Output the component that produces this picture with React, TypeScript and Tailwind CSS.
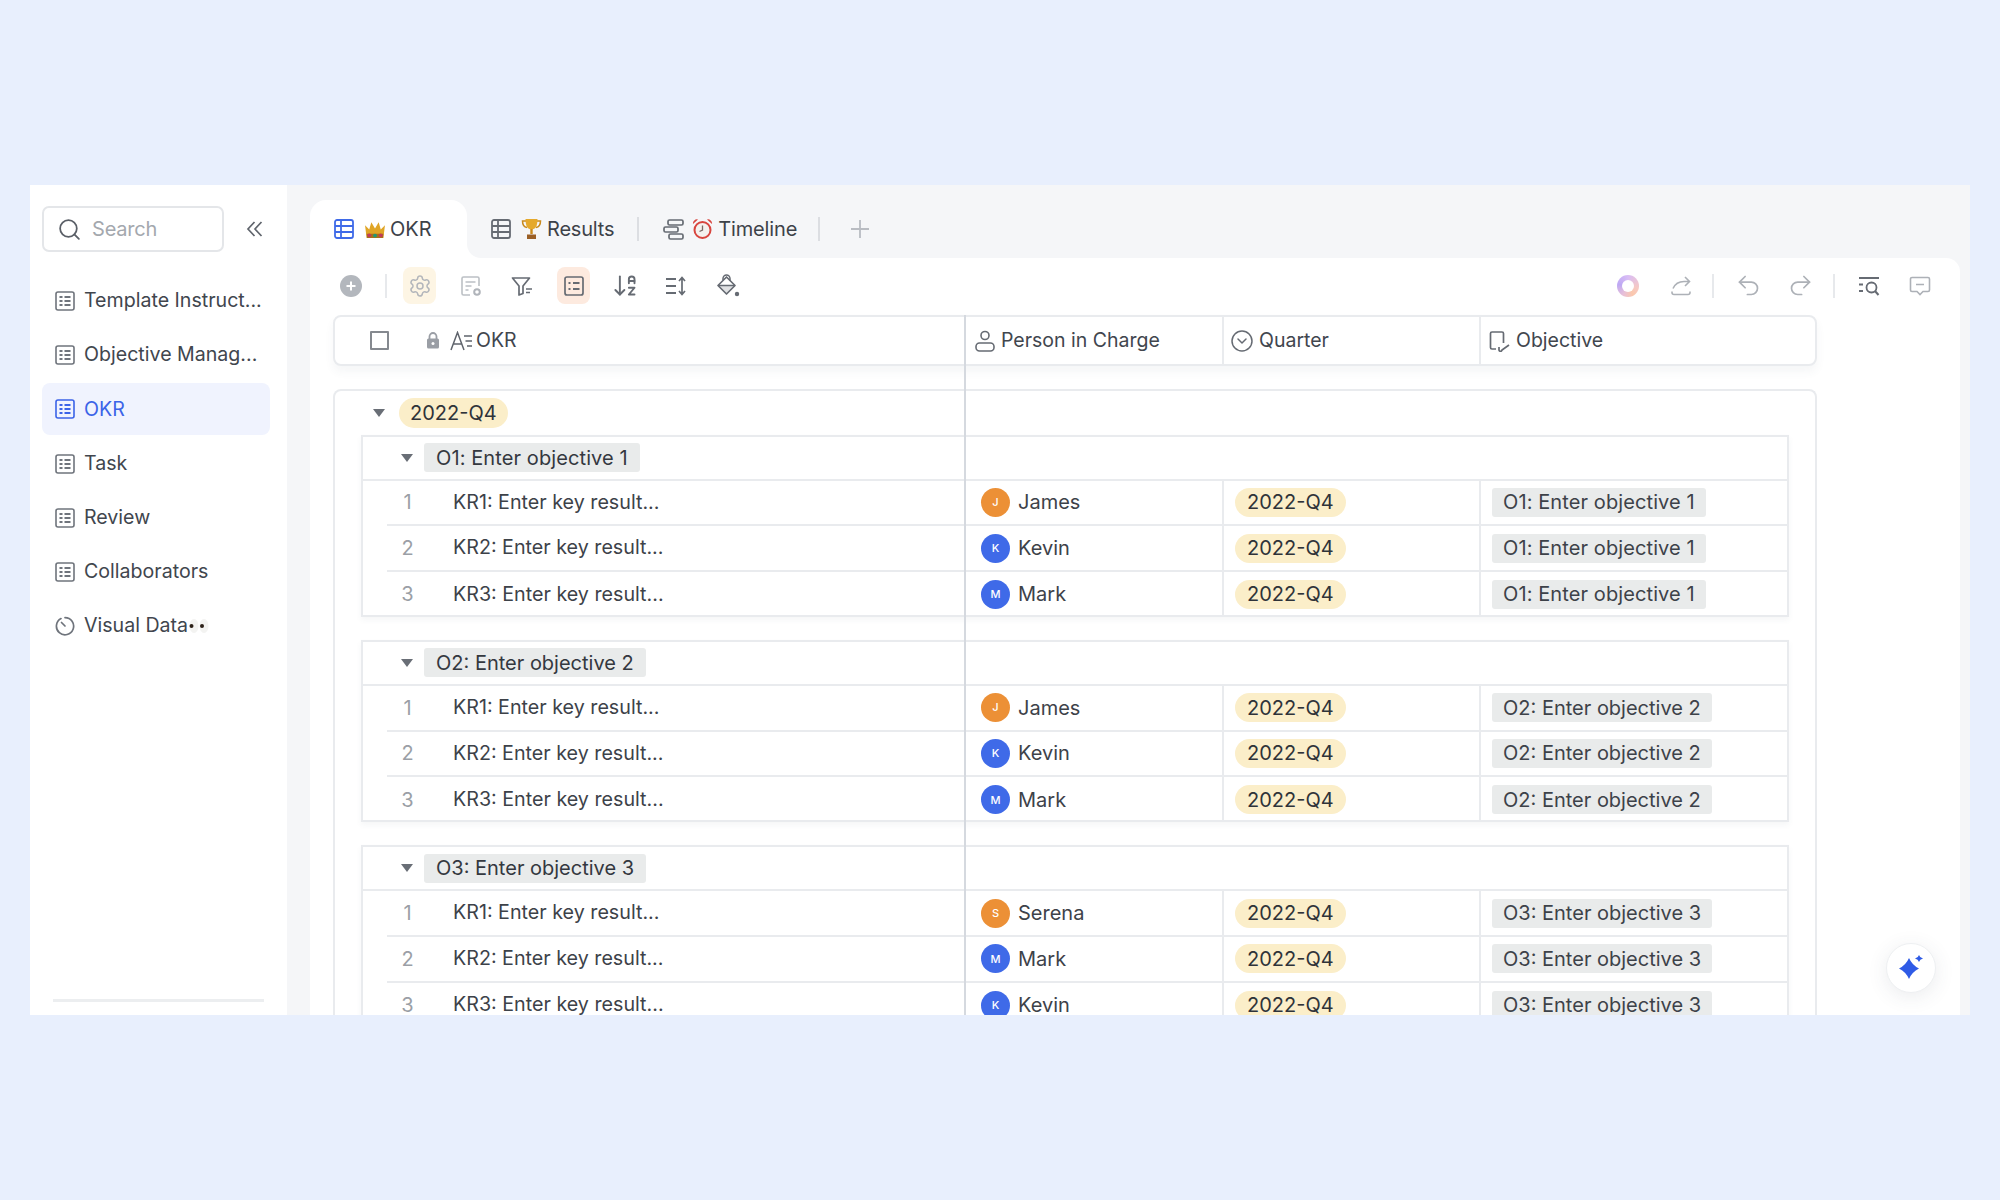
import React from "react";
import { ArrowDownAZ, CircleChevronDown, Redo2, Search, Settings, Undo2 } from "lucide-react";

const FONT = { fontFamily: "Inter, 'Noto Sans', sans-serif" };

function NavTable({ color = "#6f747c" }: { color?: string }) {
  return (
    <svg width="20" height="20" viewBox="0 0 20 20" fill="none" className="shrink-0">
      <rect x="1" y="1" width="18" height="18" rx="2" stroke={color} strokeWidth="1.6" />
      <path d="M4.5 6h3M4.5 10h3M4.5 14h3M9.5 6h6M9.5 10h6M9.5 14h6" stroke={color} strokeWidth="2" />
    </svg>
  );
}

function TabTable({ color }: { color: string }) {
  return (
    <svg width="20" height="20" viewBox="0 0 20 20" fill="none" className="shrink-0">
      <rect x="1" y="1" width="18" height="18" rx="2" stroke={color} strokeWidth="1.8" />
      <path d="M1 7h18M1 13h18M7 1v18" stroke={color} strokeWidth="1.8" />
    </svg>
  );
}

function VisualIcon() {
  return (
    <svg width="20" height="20" viewBox="0 0 20 20" fill="none" className="shrink-0">
      <path d="M6 2.6A8.6 8.6 0 1 0 10 1.6" stroke="#6f747c" strokeWidth="1.7" strokeLinecap="round" />
      <path d="M6.5 6.5 10 10" stroke="#6f747c" strokeWidth="1.7" strokeLinecap="round" />
    </svg>
  );
}

function Crown() {
  return (
    <svg width="22" height="19" viewBox="0 0 21 18" className="shrink-0">
      <path d="M1 5l4 4 2-7 3.500 6L14 2l2 7 4-4-1.500 12h-16z" fill="#e0a526" />
      <path d="M2.500 13h16l-.3 4h-15.400z" fill="#a8701a" />
      <circle cx="5" cy="14.600" r="1.800" fill="#c23a5a" />
      <circle cx="10.500" cy="14.800" r="1.800" fill="#1f9a78" />
      <circle cx="16" cy="14.600" r="1.800" fill="#c23a5a" />
    </svg>
  );
}

function Trophy() {
  return (
    <svg width="21" height="22" viewBox="0 0 21 22" fill="none" className="shrink-0">
      <path d="M5 3H1.500c0 4 1.500 6 4.500 6.500M16 3h3.500c0 4-1.500 6-4.500 6.500" stroke="#c98a1c" strokeWidth="1.500" />
      <path d="M4.500 1h12c0 7-2 10.500-6 10.500S4.500 8 4.500 1z" fill="#e5a92c" />
      <path d="M9.300 11h2.400v5h-2.400z" fill="#c98a1c" />
      <path d="M6 16.500h9V21H6z" fill="#9a5f26" />
    </svg>
  );
}

function AlarmClock() {
  return (
    <svg width="21" height="22" viewBox="0 0 21 22" fill="none" className="shrink-0">
      <path d="M1 6a4 4 0 0 1 5-4.500zM20 6a4 4 0 0 0-5-4.500z" fill="#d8453e" />
      <circle cx="10.500" cy="12" r="8" fill="#f4f1ee" stroke="#d8453e" strokeWidth="2" />
      <path d="M10.500 7.500V12l-3 1.500" stroke="#7a6a66" strokeWidth="1.300" />
    </svg>
  );
}

function Eyes() {
  return (
    <svg width="22" height="16" viewBox="0 0 22 16" className="shrink-0">
      <ellipse cx="6" cy="8" rx="4.500" ry="7" fill="#f3f3f1" />
      <ellipse cx="16" cy="8" rx="4.500" ry="7" fill="#f3f3f1" />
      <circle cx="3.500" cy="8" r="2" fill="#2c2118" />
      <circle cx="14" cy="8" r="2" fill="#2c2118" />
    </svg>
  );
}

const stroke = "#adb1b7";
const dark = "#666b73";

function PlusCircle() {
  return (
    <svg width="22" height="22" viewBox="0 0 22 22" className="shrink-0">
      <circle cx="11" cy="11" r="11" fill="#b3b7bd" />
      <path d="M11 6.500v9M6.500 11h9" stroke="#fff" strokeWidth="2" />
    </svg>
  );
}

function DocGear() {
  return (
    <svg width="22" height="22" viewBox="0 0 22 22" fill="none">
      <path d="M10 20H3.500A1.500 1.500 0 0 1 2 18.500v-15A1.500 1.500 0 0 1 3.500 2h14A1.500 1.500 0 0 1 19 3.500V11" stroke="#bcc0c5" strokeWidth="1.600" />
      <path d="M5.500 7h10M5.500 11h6M5.500 15h3" stroke="#bcc0c5" strokeWidth="1.600" />
      <circle cx="17" cy="17" r="2.800" stroke="#b0b4ba" strokeWidth="2" />
    </svg>
  );
}

function FilterIcon() {
  return (
    <svg width="22" height="22" viewBox="0 0 22 22" fill="none">
      <path d="M1.500 3h17l-6.500 8v7.500L8 20v-9z" stroke={dark} strokeWidth="1.700" strokeLinejoin="round" />
      <path d="M15 14h6M15 17.500h4" stroke={dark} strokeWidth="1.600" />
    </svg>
  );
}

function CardIcon() {
  return (
    <svg width="22" height="22" viewBox="0 0 22 22" fill="none">
      <rect x="2" y="2" width="18" height="18" rx="2" stroke={dark} strokeWidth="1.700" />
      <path d="M5.500 8h2M5.500 14h2M10 8h6.500M10 14h6.500" stroke={dark} strokeWidth="1.900" />
    </svg>
  );
}

function RowHeight() {
  return (
    <svg width="22" height="22" viewBox="0 0 22 22" fill="none">
      <path d="M1 4h10M1 11h10M1 18h10" stroke={dark} strokeWidth="1.800" />
      <path d="M17 3v16M14 6l3-3.500L20 6M14 16l3 3.500 3-3.500" stroke={dark} strokeWidth="1.700" />
    </svg>
  );
}

function Bucket() {
  return (
    <svg width="24" height="24" viewBox="0 0 24 24" fill="none">
      <path d="M7 6V4.500a3.500 3.500 0 0 1 7 0V7" stroke={dark} strokeWidth="1.500" />
      <path d="M10.500 3 2 11.500 10.500 20 19 11.500z" stroke={dark} strokeWidth="1.700" strokeLinejoin="round" />
      <path d="M2.500 11.500H18.500" stroke={dark} strokeWidth="1.500" />
      <path d="M3.500 12h14l-7 7z" fill={dark} opacity=".2" />
      <circle cx="21" cy="20" r="2.200" fill={dark} />
    </svg>
  );
}

function Ring() {
  return (
    <div className="w-[22px] h-[22px] rounded-full bg-[conic-gradient(#d9bdf5,#f6c9c4_100deg,#fbc8ad_150deg,#e8c0d8_210deg,#bda8f4_280deg,#d9bdf5)] flex items-center justify-center shrink-0">
      <div className="w-[12px] h-[12px] rounded-full bg-white" />
    </div>
  );
}

function ShareIcon() {
  return (
    <svg width="22" height="22" viewBox="0 0 22 22" fill="none">
      <path d="M3 13.500C5 9 8.500 6.500 14 6.500h5M15 2l4.500 4.500L15 11" stroke={stroke} strokeWidth="1.600" />
      <path d="M2 16.500v1a2 2 0 0 0 2 2h14a2 2 0 0 0 2-2v-1" stroke={stroke} strokeWidth="1.600" />
    </svg>
  );
}

function ListSearch() {
  return (
    <svg width="22" height="22" viewBox="0 0 22 22" fill="none">
      <path d="M1 3h20M1 9.500h4M1 16h4" stroke={dark} strokeWidth="2" />
      <circle cx="13.500" cy="12.500" r="5" stroke={dark} strokeWidth="1.800" />
      <path d="m17 16 3.500 4" stroke={dark} strokeWidth="2" />
    </svg>
  );
}

function Comment() {
  return (
    <svg width="22" height="22" viewBox="0 0 22 22" fill="none">
      <path d="M3 2.500h16A1.500 1.500 0 0 1 20.500 4v11a1.500 1.500 0 0 1-1.500 1.500h-5L11 19.500 8 16.500H3A1.500 1.500 0 0 1 1.500 15V4A1.500 1.500 0 0 1 3 2.500z" stroke={stroke} strokeWidth="1.600" />
      <path d="M7 9.500h8" stroke={stroke} strokeWidth="1.600" />
    </svg>
  );
}

function Lock() {
  return (
    <svg width="14" height="17" viewBox="0 0 14 17" className="shrink-0">
      <path d="M3.500 7V4.500a3.500 3.500 0 0 1 7 0V7" fill="none" stroke="#9a9ea5" strokeWidth="1.800" />
      <rect x="1" y="6.500" width="12" height="10" rx="1.500" fill="#9a9ea5" />
      <circle cx="7" cy="11.500" r="1.500" fill="#fff" />
    </svg>
  );
}

function TextField() {
  return (
    <svg width="23" height="20" viewBox="0 0 23 20" fill="none" className="shrink-0">
      <path d="M1 19 7.500 1.500 14 19M3.500 13h8" stroke="#5f646c" strokeWidth="1.500" />
      <path d="M14 5h8M15.500 10h6.500M17 15h5" stroke="#5f646c" strokeWidth="1.500" />
    </svg>
  );
}

function Person() {
  return (
    <svg width="20" height="22" viewBox="0 0 20 22" fill="none" className="shrink-0">
      <circle cx="10" cy="5.500" r="4" stroke="#666b73" strokeWidth="1.600" />
      <rect x="1" y="13" width="18" height="8" rx="3.500" stroke="#666b73" strokeWidth="1.600" />
    </svg>
  );
}

function LinkIcon() {
  return (
    <svg width="22" height="22" viewBox="0 0 22 22" fill="none" className="shrink-0">
      <path d="M7 19H3a1.500 1.500 0 0 1-1.500-1.500v-14A1.500 1.500 0 0 1 3 2h10a1.500 1.500 0 0 1 1.500 1.500V13" stroke="#666b73" strokeWidth="1.700" />
      <path d="M10 17v2.500a1.500 1.500 0 0 0 3 .5l7-5" stroke="#666b73" strokeWidth="1.700" />
    </svg>
  );
}

function Collapse() {
  return (
    <svg width="18" height="18" viewBox="0 0 18 18" fill="none" className="shrink-0 ml-[22px]">
      <path d="M8.500 2 2 9l6.500 7M15.500 2 9 9l6.500 7" stroke="#5f646c" strokeWidth="1.700" />
    </svg>
  );
}

function Caret() {
  return <div className="w-0 h-0 border-l-[6px] border-r-[6px] border-t-[8px] border-l-transparent border-r-transparent border-t-[#696e76]" />;
}

const COLS = "grid grid-cols-[604px_257px_257px_1fr]";

const NAV = ["Template Instruct...", "Objective Manag...", "OKR", "Task", "Review", "Collaborators"];

function Sidebar() {
  return (
    <aside className="w-[257px] shrink-0 bg-white flex flex-col px-[12px] pt-[21px] pb-[13px]">
      <div className="flex items-center">
        <div className="w-[182px] h-[46px] rounded-[7px] border-2 border-[#e4e6e9] flex items-center pl-[13px] gap-[10px] text-[20px] text-[#a4a8ae]">
          <Search size={25} color="#5a5f67" strokeWidth={1.7} />
          <span className="tracking-[-0.2px]">Search</span>
        </div>
        <Collapse />
      </div>
      <nav className="mt-[23px] flex flex-col gap-[2.200px] w-[228px]">
        {NAV.map((n) => {
          const active = n === "OKR";
          return (
            <div key={n} className={`h-[52px] rounded-[8px] flex items-center pl-[13px] gap-[9px] text-[19.600px] ${active ? "bg-[#f0f3fe] text-[#3b63e8]" : "text-[#41464e]"}`}>
              <NavTable color={active ? "#3b63e8" : "#6f747c"} />
              <span className="whitespace-nowrap">{n}</span>
            </div>
          );
        })}
        <div className="h-[52px] flex items-center pl-[13px] gap-[9px] text-[19.600px] text-[#41464e]">
          <VisualIcon />
          <span>Visual Data</span>
          <span className="-ml-[9px]"><Eyes /></span>
        </div>
      </nav>
      <div className="mt-auto mx-[11px] h-[3px] bg-[#eceef0]" />
    </aside>
  );
}

function TimelineIcon() {
  return (
    <svg width="21" height="21" viewBox="0 0 21 21" fill="none">
      <rect x="5" y="1" width="15" height="5" rx="1.500" stroke="#666b73" strokeWidth="1.700" />
      <rect x="1" y="8" width="14" height="5" rx="1.500" stroke="#666b73" strokeWidth="1.700" />
      <rect x="6" y="15" width="14" height="5" rx="1.500" stroke="#666b73" strokeWidth="1.700" />
    </svg>
  );
}

function Tabs() {
  return (
    <div className="flex h-[73px] pt-[15px] shrink-0 text-[20px] text-[#3d4249] pl-[23px]">
      <div className="w-[157px] bg-white rounded-t-[16px] flex items-center pl-[24px]">
        <TabTable color="#3f6ae8" />
        <span className="ml-[10px]"><Crown /></span>
        <span className="ml-[4px]">OKR</span>
      </div>
      <div className="flex-1 bg-white">
        <div className="h-full bg-[#f5f6f8] rounded-bl-[14px] flex items-center pl-[24px]">
          <TabTable color="#666b73" />
          <span className="ml-[10px]"><Trophy /></span>
          <span className="ml-[5px] tracking-[-0.2px]">Results</span>
          <div className="w-[2px] h-[24px] bg-[#dcdee2] ml-[23px]" />
          <span className="ml-[24px]"><TimelineIcon /></span>
          <span className="ml-[8px]"><AlarmClock /></span>
          <span className="ml-[5px] tracking-[-0.15px]">Timeline</span>
          <div className="w-[2px] h-[24px] bg-[#dcdee2] ml-[21px]" />
          <svg width="20" height="20" viewBox="0 0 20 20" className="ml-[30px]"><path d="M10 1v18M1 10h18" stroke="#b9bcc2" strokeWidth="1.800" /></svg>
        </div>
      </div>
    </div>
  );
}

function Sep() {
  return <div className="w-[2px] h-[24px] bg-[#e7e9ec]" />;
}

function Toolbar() {
  return (
    <div className="h-[57px] shrink-0 flex items-center pl-[30px] pr-[29px] pb-[2px]">
      <PlusCircle />
      <div className="ml-[23px]"><Sep /></div>
      <div className="ml-[16px] flex items-center gap-[19.100px]">
        <div className="w-[33px] h-[37px] rounded-[8px] bg-[#fdf5e4] flex items-center justify-center">
          <Settings size={24} color="#b3b6bb" strokeWidth={1.500} />
        </div>
        <div className="w-[32px] flex justify-center"><DocGear /></div>
        <div className="w-[32px] flex justify-center"><FilterIcon /></div>
        <div className="w-[33px] h-[37px] rounded-[8px] bg-[#fdeadf] flex items-center justify-center"><CardIcon /></div>
        <div className="w-[32px] flex justify-center"><ArrowDownAZ size={27} color={dark} strokeWidth={1.700} /></div>
        <div className="w-[32px] flex justify-center"><RowHeight /></div>
        <div className="w-[32px] flex justify-center"><Bucket /></div>
      </div>
      <div className="ml-auto flex items-center">
        <Ring />
        <div className="ml-[31px]"><ShareIcon /></div>
        <div className="ml-[20px]"><Sep /></div>
        <Undo2 size={27} color={stroke} strokeWidth={1.500} className="ml-[21px]" />
        <Redo2 size={27} color={stroke} strokeWidth={1.500} className="ml-[25px]" />
        <div className="ml-[19px]"><Sep /></div>
        <div className="ml-[23px]"><ListSearch /></div>
        <div className="ml-[29px]"><Comment /></div>
      </div>
    </div>
  );
}

function HeaderRow() {
  return (
    <div className="grid grid-cols-[632px_257px_257px_1fr] h-[51px] rounded-[8px] border-2 border-[#e9ebee] bg-white shadow-[0_6px_10px_rgba(60,70,90,0.05)] text-[19.500px] text-[#41464e]">
      <div className="flex items-center pl-[35px]">
        <div className="w-[19px] h-[19px] border-2 border-[#85898f] rounded-[1px]" />
        <span className="ml-[37px]"><Lock /></span>
        <span className="ml-[10px]"><TextField /></span>
        <span className="ml-[3px]">OKR</span>
      </div>
      <div className="flex items-center pl-[8px] gap-[6px] border-r-2 border-[#e9ebee]"><Person /><span>Person in Charge</span></div>
      <div className="flex items-center pl-[6px] gap-[5px] border-r-2 border-[#e9ebee]"><CircleChevronDown size={24} color="#666b73" strokeWidth={1.500} /><span>Quarter</span></div>
      <div className="flex items-center pl-[8px] gap-[5px]"><LinkIcon /><span>Objective</span></div>
    </div>
  );
}

type Row = { kr: string; person: string; color: string };

function Avatar({ name, color }: { name: string; color: string }) {
  return (
    <div className={`w-[29px] h-[29px] rounded-full flex items-center justify-center text-white text-[11px] font-medium ${color}`}>
      {name[0]}
    </div>
  );
}

function ObjectiveBox({ title, rows, tagClass }: { title: string; rows: Row[]; tagClass: string }) {
  return (
    <section className="border-2 border-[#e9ebee] bg-white shadow-[0_3px_6px_rgba(60,70,90,0.05)]">
      <div className="h-[44px] border-b-2 border-[#e9ebee] flex items-center pl-[38px]">
        <Caret />
        <div className={`ml-[11px] h-[29px] px-[12px] flex items-center rounded-[3px] bg-[#e9ebeb] text-[#34383f] whitespace-nowrap ${tagClass}`}>{title}</div>
      </div>
      {rows.map((r, i) => {
        const last = i === 2;
        const rowCls = last ? "h-[43px]" : "h-[45.700px]";
        const line = last ? "pt-[2px]" : "border-b-2";
        return (
          <div key={i} className={`${COLS} ${rowCls}`}>
            <div className={`ml-[24px] flex items-center border-[#e9ebee] ${line}`}>
              <span className="w-[41px] text-center text-[#9b9fa6]">{i + 1}</span>
              <span className="ml-[25px] text-[19.700px] text-[#3d4249] whitespace-nowrap">{r.kr}</span>
            </div>
            <div className={`flex items-center pl-[14px] gap-[8px] border-r-2 border-[#e9ebee] text-[#3d4249] ${line}`}>
              <Avatar name={r.person} color={r.color} />
              <span>{r.person}</span>
            </div>
            <div className={`flex items-center pl-[11px] border-r-2 border-[#e9ebee] ${line}`}>
              <span className="h-[29px] px-[12px] flex items-center rounded-full bg-[#fbeec9] text-[#2f3339]">2022-Q4</span>
            </div>
            <div className={`flex items-center pl-[11px] border-[#e9ebee] ${line}`}>
              <span className={`h-[29px] px-[11px] flex items-center rounded-[3px] bg-[#e9ebeb] text-[#3d4249] whitespace-nowrap ${tagClass}`}>{title}</span>
            </div>
          </div>
        );
      })}
    </section>
  );
}

const ORANGE = "bg-[#ec9036]";
const BLUE = "bg-[#3f6ae8]";

const GROUPS: { title: string; tagClass: string; rows: Row[] }[] = [
  {
    title: "O1: Enter objective 1",
    tagClass: "tracking-[0.1px]",
    rows: [
      { kr: "KR1: Enter key result...", person: "James", color: ORANGE },
      { kr: "KR2: Enter key result...", person: "Kevin", color: BLUE },
      { kr: "KR3: Enter key result...", person: "Mark", color: BLUE },
    ],
  },
  {
    title: "O2: Enter objective 2",
    tagClass: "tracking-normal",
    rows: [
      { kr: "KR1: Enter key result...", person: "James", color: ORANGE },
      { kr: "KR2: Enter key result...", person: "Kevin", color: BLUE },
      { kr: "KR3: Enter key result...", person: "Mark", color: BLUE },
    ],
  },
  {
    title: "O3: Enter objective 3",
    tagClass: "tracking-normal",
    rows: [
      { kr: "KR1: Enter key result...", person: "Serena", color: ORANGE },
      { kr: "KR2: Enter key result...", person: "Mark", color: BLUE },
      { kr: "KR3: Enter key result...", person: "Kevin", color: BLUE },
    ],
  },
];

function Table() {
  return (
    <div className="relative ml-[23px] w-[1484px] flex flex-col">
      <HeaderRow />
      <div className="mt-[23px] rounded-t-[8px] border-2 border-b-0 border-[#e9ebee] bg-white text-[20px] pb-[24px]">
        <div className="h-[43.500px] flex items-center pl-[38px]">
          <Caret />
          <span className="ml-[14px] h-[30px] px-[11px] flex items-center rounded-full bg-[#fbeec9] text-[#2f3339]">2022-Q4</span>
        </div>
        <div className="ml-[26px] mr-[26px] flex flex-col gap-[23px]">
          {GROUPS.map((g) => (
            <ObjectiveBox key={g.title} title={g.title} rows={g.rows} tagClass={g.tagClass} />
          ))}
        </div>
      </div>
      <div className="absolute left-[631px] top-0 bottom-0 w-[2px] bg-[#d5d9df]" />
    </div>
  );
}

export default function App() {
  return (
    <div className="h-[1200px] bg-[#e8effd] pt-[185px] px-[30px] overflow-hidden" style={FONT}>
      <div className="h-[830px] flex overflow-hidden">
        <Sidebar />
        <main className="flex-1 min-w-0 bg-[#f5f6f8] flex flex-col">
          <Tabs />
          <div className="relative flex-1 min-h-0 ml-[23px] mr-[10px] bg-white rounded-tr-[14px] overflow-hidden flex flex-col">
            <Toolbar />
            <Table />
            <div className="absolute right-[24px] bottom-[22px] w-[50px] h-[50px] rounded-full bg-white border border-[#eef0f2] shadow-[0_4px_20px_rgba(60,70,90,0.10)] flex items-center justify-center">
              <svg width="26" height="26" viewBox="0 0 26 26">
                <path d="M11 3Q14 10 21 13.500Q14 17 11 24Q8 17 1 13.500Q8 10 11 3z" fill="#2f5be6" />
                <path d="M21 0Q21.800 2.800 25 3.500Q21.800 4.300 21 7Q20.200 4.300 17 3.500Q20.200 2.800 21 0z" fill="#2f5be6" />
              </svg>
            </div>
          </div>
        </main>
      </div>
    </div>
  );
}
